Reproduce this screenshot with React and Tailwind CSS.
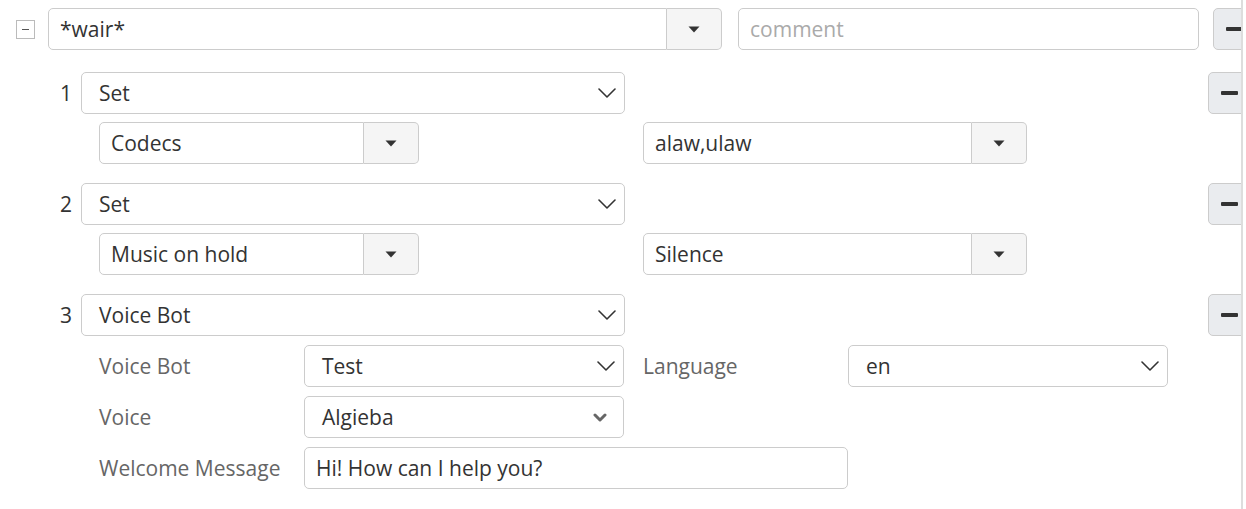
import React from "react";

const font = { fontFamily: '"Open Sans", "Liberation Sans", sans-serif' };

function Caret() {
  return (
    <svg width="12" height="7" viewBox="0 0 12 7">
      <path d="M0.5 0.5 H11.5 L6 6.5 Z" fill="#333" />
    </svg>
  );
}

function Chevron() {
  return (
    <svg width="18" height="10" viewBox="0 0 18 10" fill="none">
      <path d="M1 1 L9 9 L17 1" stroke="#333" strokeWidth="1.6" strokeLinecap="round" strokeLinejoin="round" />
    </svg>
  );
}

function BoldChevron() {
  return (
    <svg width="14" height="9" viewBox="0 0 14 9" fill="none">
      <path d="M2 2 L7 7 L12 2" stroke="#666" strokeWidth="3" strokeLinecap="round" strokeLinejoin="round" />
    </svg>
  );
}

function ComboInput({ value, width }) {
  return (
    <div className="flex h-[42px] shrink-0" style={{ width }}>
      <div className="flex-1 flex items-center border border-[#ccc] rounded-l-[5px] pl-[11px] bg-white text-[#333]">
        {value}
      </div>
      <div className="w-[55px] shrink-0 flex items-center justify-center border border-l-0 border-[#ccc] rounded-r-[5px] bg-[#f5f5f5]">
        <Caret />
      </div>
    </div>
  );
}

function Select({ value, width, bold }) {
  return (
    <div
      className="h-[42px] shrink-0 flex items-center justify-between border border-[#ccc] rounded-[5px] pl-[17px] pr-[8px] bg-white text-[#333]"
      style={{ width }}
    >
      <span>{value}</span>
      {bold ? <span className="pr-[8px]"><BoldChevron /></span> : <Chevron />}
    </div>
  );
}

function MinusButton() {
  return (
    <div className="w-[42px] h-[42px] shrink-0 flex items-center justify-center border border-[#ccc] rounded-[5px] bg-[#eaecef]">
      <div className="w-[17px] h-[4px] bg-[#333] rounded-[1px]" />
    </div>
  );
}

function StepRow({ num, action }) {
  return (
    <div className="flex items-center">
      <div className="w-[33px] shrink-0 pr-[9px] text-right text-[#333]">{num}</div>
      <Select value={action} width="544px" />
      <div className="ml-[583px] shrink-0">
        <MinusButton />
      </div>
    </div>
  );
}

function SetParams({ name, value }) {
  return (
    <div className="flex ml-[51px] mt-[8px] gap-[224px]">
      <ComboInput value={name} width="320px" />
      <ComboInput value={value} width="384px" />
    </div>
  );
}

export default function App() {
  return (
    <div className="w-[1243px] h-[509px] overflow-hidden border-r-2 border-[#ddd] bg-white text-[21px] leading-none" style={font}>
      <div className="flex items-center pt-[8px] pl-[16px]">
        <div className="w-[19px] h-[19px] shrink-0 border border-[#bbb] flex items-center justify-center">
          <div className="w-[7px] h-[1px] bg-[#555]" />
        </div>
        <div className="ml-[13px] shrink-0">
          <ComboInput value="*wair*" width="674px" />
        </div>
        <div className="ml-[16px] w-[461px] h-[42px] shrink-0 flex items-center border border-[#ccc] rounded-[5px] pl-[11px] text-[#aaa]">
          comment
        </div>
        <div className="ml-[14px] shrink-0">
          <MinusButton />
        </div>
      </div>

      <div className="pl-[48px] mt-[22px] flex flex-col">
        <StepRow num="1" action="Set" />
        <SetParams name="Codecs" value="alaw,ulaw" />

        <div className="mt-[19px]">
          <StepRow num="2" action="Set" />
        </div>
        <SetParams name="Music on hold" value="Silence" />

        <div className="mt-[19px]">
          <StepRow num="3" action="Voice Bot" />
        </div>
        <div className="ml-[51px] mt-[9px] flex flex-col gap-[9px]">
          <div className="flex items-center">
            <div className="w-[205px] shrink-0 text-[#666]">Voice Bot</div>
            <Select value="Test" width="320px" />
            <div className="w-[205px] shrink-0 ml-[19px] text-[#666]">Language</div>
            <Select value="en" width="320px" />
          </div>
          <div className="flex items-center">
            <div className="w-[205px] shrink-0 text-[#666]">Voice</div>
            <Select value="Algieba" width="320px" bold />
          </div>
          <div className="flex items-center">
            <div className="w-[205px] shrink-0 text-[#666]">Welcome Message</div>
            <div className="w-[544px] h-[42px] shrink-0 flex items-center border border-[#ccc] rounded-[5px] pl-[11px] text-[#333]">
              Hi! How can I help you?
            </div>
          </div>
        </div>
      </div>
    </div>
  );
}
